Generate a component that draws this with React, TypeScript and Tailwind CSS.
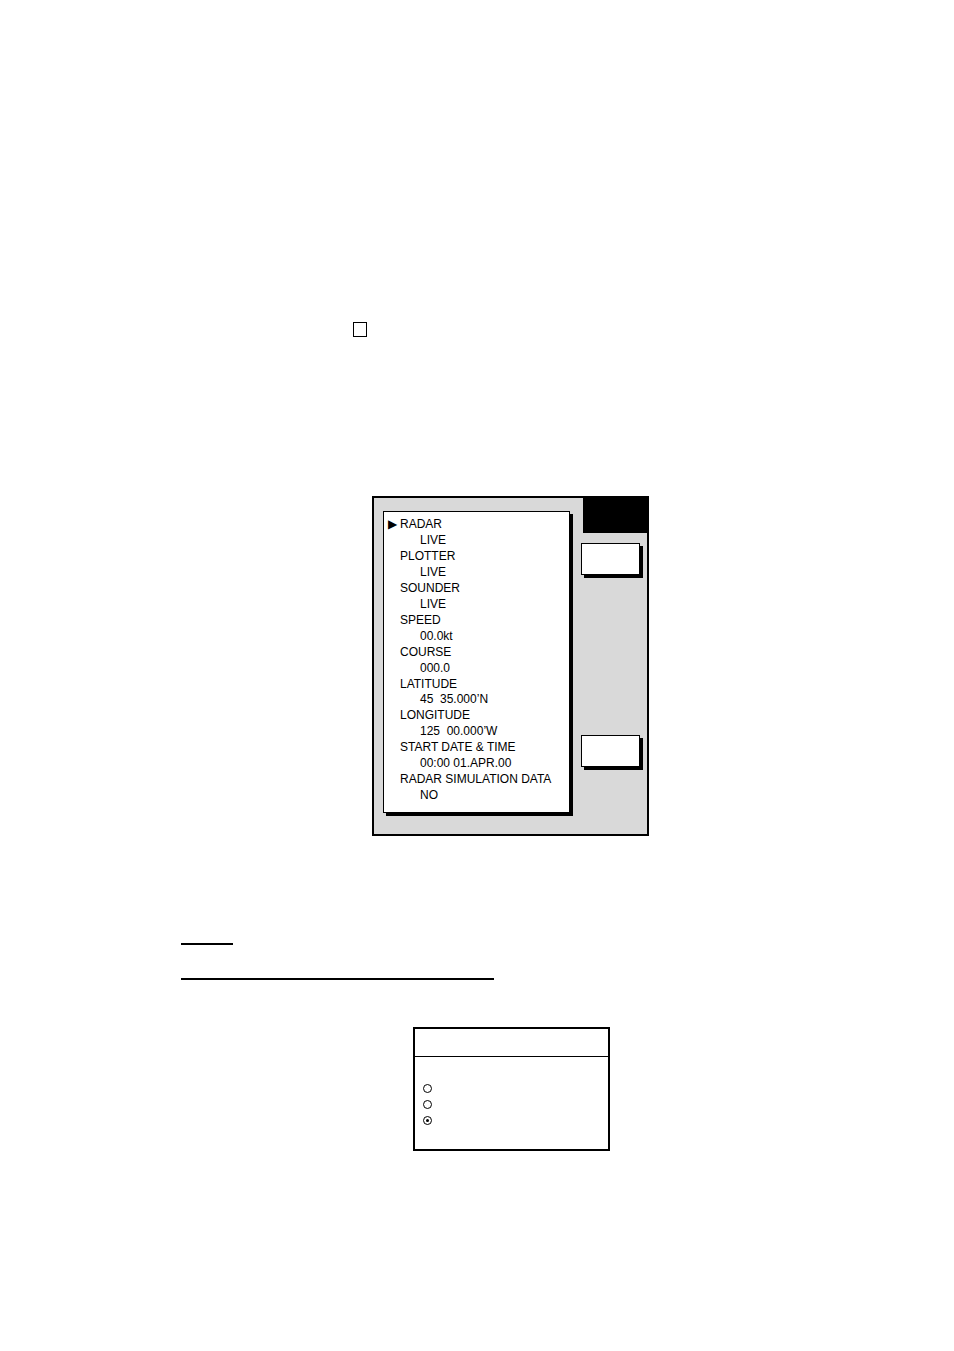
import React from 'react';

const items: [string, string][] = [
  ['RADAR', 'LIVE'],
  ['PLOTTER', 'LIVE'],
  ['SOUNDER', 'LIVE'],
  ['SPEED', '00.0kt'],
  ['COURSE', '000.0'],
  ['LATITUDE', '45  35.000’N'],
  ['LONGITUDE', '125  00.000’W'],
  ['START DATE & TIME', '00:00 01.APR.00'],
  ['RADAR SIMULATION DATA', 'NO'],
];

const Radio: React.FC<{ on?: boolean }> = ({ on }) => (
  <div className="w-[9px] h-[9px] rounded-full border border-black flex items-center justify-center">
    {on && <div className="w-[3px] h-[3px] rounded-full bg-black" />}
  </div>
);

const App: React.FC = () => {
  return (
    <div className="w-[954px] h-[1351px] bg-white flex flex-col font-['Liberation_Sans',Arial,sans-serif] text-black">
      {/* small checkbox */}
      <div className="mt-[322px] ml-[353px] w-[14px] h-[15px] border-[1.5px] border-black" />

      {/* simulation menu */}
      <div className="mt-[159px] ml-[372px] w-[277px] h-[340px] border-2 border-black bg-[#d9d9d9] flex">
        <div className="ml-[9px] mt-[13px] w-[187px] h-[302px] border border-black bg-white shadow-[3px_3px_0_0_#000] pt-[5px] text-[12px] leading-[15.95px] whitespace-pre">
          {items.map(([label, value], i) => (
            <div key={label}>
              <div className="flex">
                <div className="w-[16px] pl-[4px] text-[12px] leading-[15px]">{i === 0 ? '▶' : ''}</div>
                <div>{label}</div>
              </div>
              <div className="pl-[36px]">{value}</div>
            </div>
          ))}
        </div>
        <div className="ml-auto w-[66px] flex flex-col">
          <div className="self-end w-[64px] h-[35px] bg-black" />
          <div className="mt-[10px] w-[59px] h-[32px] border border-black bg-white shadow-[3px_3px_0_0_#000]" />
          <div className="mt-[160px] w-[59px] h-[32px] border border-black bg-white shadow-[3px_3px_0_0_#000]" />
        </div>
      </div>

      {/* underlines */}
      <div className="mt-[107px] ml-[181px] w-[52px] h-[2px] bg-black" />
      <div className="mt-[33px] ml-[181px] w-[313px] h-[2px] bg-black" />

      {/* selection dialog */}
      <div className="mt-[47px] ml-[413px] w-[197px] h-[124px] border-2 border-black flex flex-col">
        <div className="h-[28px] border-b border-black" />
        <div className="flex flex-col gap-[7px] pl-[8px] pt-[27px]">
          <Radio />
          <Radio />
          <Radio on />
        </div>
      </div>
    </div>
  );
};

export default App;
